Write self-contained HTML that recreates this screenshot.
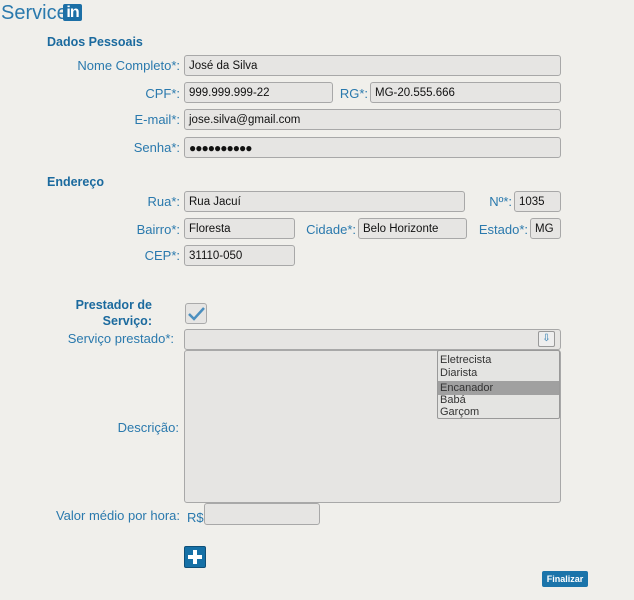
<!DOCTYPE html>
<html><head><meta charset="utf-8"><style>
body{margin:0;width:634px;height:600px;background:#f0efeb;font-family:"Liberation Sans",sans-serif;position:relative;overflow:hidden}
.a{position:absolute}
.l{position:absolute;color:#2a79ad;font-size:13px;text-align:right;white-space:nowrap;line-height:16px}
.h{position:absolute;color:#1b6a9e;font-size:12.5px;font-weight:bold;line-height:16px}
.i{position:absolute;background:#e6e5e3;border:1px solid #a8a8a8;border-radius:3px;box-sizing:border-box;font-size:11.5px;color:#111;padding-left:4px;line-height:20px}
</style></head><body>
<div class="a" style="left:1px;top:1px;font-size:20px;color:#2a79ad;line-height:24px">Service</div>
<div class="a" style="left:63px;top:4px;width:19px;height:17px;background:#1c6fa6;border-radius:2px;color:#fff;font-weight:bold;font-size:16px;line-height:17px;text-align:center;letter-spacing:-1px">in</div>

<div class="h" style="left:47px;top:34px">Dados Pessoais</div>
<div class="l" style="right:454px;top:58px">Nome Completo*:</div>
<div class="i" style="left:184px;top:55px;width:377px;height:21px">José da Silva</div>
<div class="l" style="right:454px;top:86px">CPF*:</div>
<div class="i" style="left:184px;top:82px;width:149px;height:21px">999.999.999-22</div>
<div class="l" style="right:266px;top:86px">RG*:</div>
<div class="i" style="left:370px;top:82px;width:191px;height:21px">MG-20.555.666</div>
<div class="l" style="right:454px;top:112px">E-mail*:</div>
<div class="i" style="left:184px;top:109px;width:377px;height:21px">jose.silva@gmail.com</div>
<div class="l" style="right:454px;top:140px">Senha*:</div>
<div class="i" style="left:184px;top:137px;width:377px;height:21px;font-size:12px;letter-spacing:-1px">●●●●●●●●●●</div>

<div class="h" style="left:47px;top:174px">Endereço</div>
<div class="l" style="right:454px;top:194px">Rua*:</div>
<div class="i" style="left:184px;top:191px;width:281px;height:21px">Rua Jacuí</div>
<div class="l" style="right:122px;top:194px">Nº*:</div>
<div class="i" style="left:514px;top:191px;width:47px;height:21px">1035</div>
<div class="l" style="right:454px;top:222px">Bairro*:</div>
<div class="i" style="left:184px;top:218px;width:111px;height:21px">Floresta</div>
<div class="l" style="right:278px;top:222px">Cidade*:</div>
<div class="i" style="left:358px;top:218px;width:109px;height:21px">Belo Horizonte</div>
<div class="l" style="right:106px;top:222px">Estado*:</div>
<div class="i" style="left:530px;top:218px;width:31px;height:21px">MG</div>
<div class="l" style="right:454px;top:248px">CEP*:</div>
<div class="i" style="left:184px;top:245px;width:111px;height:21px">31110-050</div>

<div class="h" style="right:482px;top:297px;text-align:right">Prestador de<br>Serviço:</div>
<div class="a" style="left:185px;top:303px;width:22px;height:21px;border:1px solid #aaa;border-radius:3px;box-sizing:border-box;background:#e6e5e3"><svg width="20" height="19" style="position:absolute;left:0;top:0"><path d="M3 10 L8 15 L18 4" stroke="#4b8fbf" stroke-width="2.5" fill="none"/></svg></div>
<div class="l" style="right:460px;top:331px">Serviço prestado*:</div>
<div class="i" style="left:184px;top:329px;width:377px;height:21px"></div>
<div class="a" style="left:538px;top:331px;width:17px;height:16px;border:1px solid #999;border-radius:2px;box-sizing:border-box;background:#eee;color:#2a79ad;font-size:10px;text-align:center;line-height:14px">⇩</div>
<div class="i" style="left:184px;top:350px;width:377px;height:153px"></div>
<div class="a" style="left:437px;top:350px;width:123px;height:69px;border:1px solid #999;border-radius:2px;box-sizing:border-box;background:#e4e4e2;font-size:11px;color:#333;line-height:13px">
<div style="padding:3px 0 0 2px">Eletrecista</div>
<div style="padding-left:2px;height:14px">Diarista</div>
<div style="padding-left:2px;background:#a0a0a0;height:14px;line-height:14px">Encanador</div>
<div style="padding-left:2px;line-height:11px">Babá</div>
<div style="padding-left:2px;line-height:12px">Garçom</div>
</div>
<div class="l" style="right:455px;top:420px">Descrição:</div>
<div class="l" style="right:454px;top:508px">Valor médio por hora:</div>
<div class="l" style="left:187px;top:510px;text-align:left">R$</div>
<div class="i" style="left:204px;top:503px;width:116px;height:22px"></div>
<div class="a" style="left:184px;top:546px;width:22px;height:22px;background:#1570a6;border:1px solid #0e4f78;border-radius:2px;box-sizing:border-box"><div class="a" style="left:3px;top:8px;width:14px;height:4px;background:#fff"></div><div class="a" style="left:8px;top:3px;width:4px;height:14px;background:#fff"></div></div>
<div class="a" style="left:542px;top:571px;width:46px;height:16px;background:#1b74aa;border-radius:2px;color:#fff;font-size:9px;font-weight:bold;text-align:center;line-height:16px">Finalizar</div>
</body></html>
